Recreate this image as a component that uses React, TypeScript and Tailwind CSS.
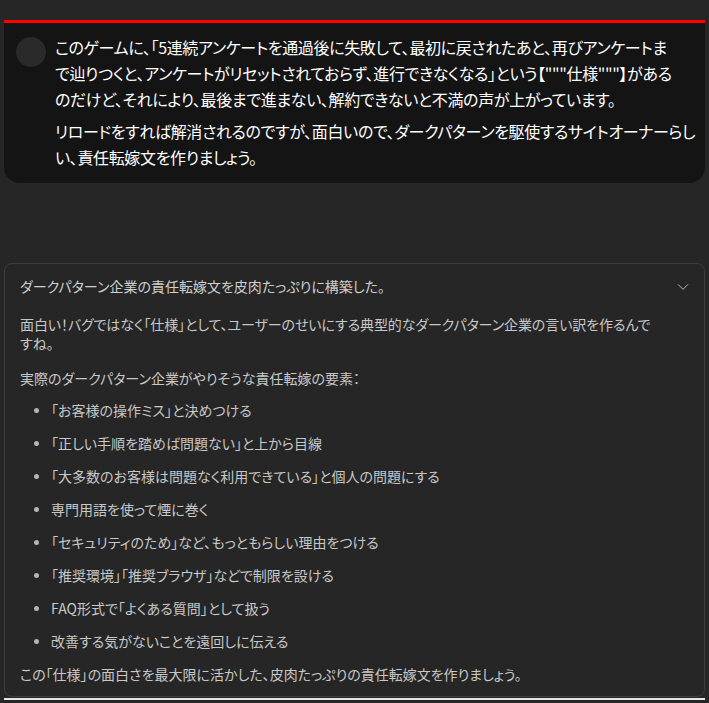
const jp = "font-['Noto_Sans_CJK_JP','Noto_Sans',sans-serif] [font-feature-settings:'palt']";

const bullets = [
  "「お客様の操作ミス」と決めつける",
  "「正しい手順を踏めば問題ない」と上から目線",
  "「大多数のお客様は問題なく利用できている」と個人の問題にする",
  "専門用語を使って煙に巻く",
  "「セキュリティのため」など、もっともらしい理由をつける",
  "「推奨環境」「推奨ブラウザ」などで制限を設ける",
  "FAQ形式で「よくある質問」として扱う",
  "改善する気がないことを遠回しに伝える",
];

const App = () => {
  return (
    <div className={`min-h-[703px] w-full bg-[#262626] pt-5 ${jp}`}>
      <div className="ml-1 mr-1 rounded-b-2xl border-t-[3px] border-[#ff0000] bg-[#141414] pb-[13px] pt-[11px]">
        <div className="flex flex-row">
          <div className="ml-[12px] mt-[3px] h-[30px] w-[30px] shrink-0 rounded-full bg-[#2a2a2a]" />
          <div className="ml-[9px] text-[16px] leading-[26px] tracking-[-0.35px] text-white">
            <p className="whitespace-nowrap">
              このゲームに、「5連続アンケートを通過後に失敗して、最初に戻されたあと、再びアンケートま
              <br />
              で辿りつくと、アンケートがリセットされておらず、進行できなくなる」という【"""仕様"""】がある
              <br />
              のだけど、それにより、最後まで進まない、解約できないと不満の声が上がっています。
            </p>
            <p className="mt-[6px] whitespace-nowrap">
              リロードをすれば解消されるのですが、面白いので、ダークパターンを駆使するサイトオーナーらし
              <br />
              い、責任転嫁文を作りましょう。
            </p>
          </div>
        </div>
      </div>

      <div className="mx-1 mt-[80px] rounded-lg border border-[#3e3e3e] text-[14px] text-[#c8c8c8]">
        <div className="flex h-[45px] flex-row items-center justify-between pl-[15px] pr-[14px]">
          <span className="whitespace-nowrap text-[#cfcfcf]">
            ダークパターン企業の責任転嫁文を皮肉たっぷりに構築した。
          </span>
          <svg width="14" height="14" viewBox="0 0 24 24" fill="none" stroke="#c4c4c4" strokeWidth="1.6" strokeLinecap="round" strokeLinejoin="round">
            <path d="M4 8l8 8 8-8" />
          </svg>
        </div>
        <div className="px-[15px] pb-[12px] leading-[19px]">
          <p className="mt-[6px] whitespace-nowrap tracking-[-0.1px]">
            面白い！バグではなく「仕様」として、ユーザーのせいにする典型的なダークパターン企業の言い訳を作るんで
            <br />
            すね。
          </p>
          <p className="mt-[16px]">実際のダークパターン企業がやりそうな責任転嫁の要素：</p>
          <ul className="mt-[6px]">
            {bullets.map((b) => (
              <li key={b} className="flex flex-row items-center py-[7px]">
                <span className="ml-[14px] mr-[12px] h-[5px] w-[5px] rounded-full bg-[#b5b5b5]" />
                <span className="whitespace-nowrap">{b}</span>
              </li>
            ))}
          </ul>
          <p className="mt-[7px]">この「仕様」の面白さを最大限に活かした、皮肉たっぷりの責任転嫁文を作りましょう。</p>
        </div>
      </div>
      <div className="mx-1 mt-[1px] h-[2px] bg-[#e5e5e5]" />
    </div>
  );
};

export default App;
